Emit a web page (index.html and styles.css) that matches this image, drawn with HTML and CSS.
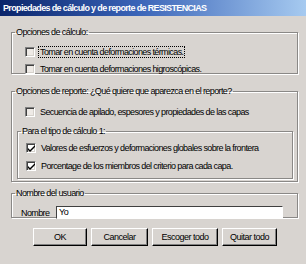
FILE: index.html
```html
<!DOCTYPE html>
<html>
<head>
<meta charset="utf-8">
<link rel="stylesheet" href="styles.css">
</head>
<body>
<div class="window">
  <div class="titlebar">Propiedades de cálculo y de reporte de RESISTENCIAS</div>
  <div class="content">
    <fieldset class="group g1">
      <legend>Opciones de cálculo:</legend>
      <div class="row"><span class="cb"></span><span class="lbl focus">Tomar en cuenta deformaciones térmicas.</span></div>
      <div class="row"><span class="cb"></span><span class="lbl">Tomar en cuenta deformaciones higroscópicas.</span></div>
    </fieldset>
    <fieldset class="group g2">
      <legend>Opciones de reporte: ¿Qué quiere que aparezca en el reporte?</legend>
      <div class="row"><span class="cb"></span><span class="lbl">Secuencia de apilado, espesores y propiedades de las capas</span></div>
      <fieldset class="group g2b">
        <legend>Para el tipo de cálculo 1:</legend>
        <div class="row"><span class="cb on"><svg viewBox="0 0 7 7" width="7" height="7"><path d="M0 3 L2 5 L7 0 L7 2 L2 7 L0 5 Z" fill="#000"/></svg></span><span class="lbl">Valores de esfuerzos y deformaciones globales sobre la frontera</span></div>
        <div class="row"><span class="cb on"><svg viewBox="0 0 7 7" width="7" height="7"><path d="M0 3 L2 5 L7 0 L7 2 L2 7 L0 5 Z" fill="#000"/></svg></span><span class="lbl">Porcentage de los miembros del criterio para cada capa.</span></div>
      </fieldset>
    </fieldset>
    <fieldset class="group g3">
      <legend>Nombre del usuario</legend>
      <div class="namerow"><span class="nlbl">Nombre</span><span class="input">Yo</span></div>
    </fieldset>
    <div class="buttons">
      <span class="btn b1">OK</span>
      <span class="btn b2">Cancelar</span>
      <span class="btn b3">Escoger todo</span>
      <span class="btn b4">Quitar todo</span>
    </div>
  </div>
</div>
</body>
</html>
```
FILE: styles.css
```css
html, body { margin: 0; padding: 0; }
body {
  width: 306px; height: 264px; overflow: hidden;
  background: #d8d4d0;
  font-family: "Liberation Sans", Arial, sans-serif;
  font-size: 9px;
  color: #000;
}
.window { width: 306px; height: 264px; }
.titlebar {
  height: 16px;
  line-height: 16px;
  padding-left: 3px;
  background: linear-gradient(to right, #0a246a 0%, #3a64b8 45%, #a6caf0 100%);
  color: #fff;
  font-weight: bold;
  font-size: 9px;
  letter-spacing: -0.65px;
  white-space: nowrap;
}
.content { padding: 0 8px 0 11px; }
.group {
  margin: 0;
  padding: 0;
  border: 1px solid #8a8886;
  box-shadow: 1px 1px 0 #fff, inset 1px 1px 0 #fff;
}
.group legend {
  padding: 0 1px;
  margin-left: 3px;
  line-height: 10px;
  letter-spacing: -0.6px;
}
.g1 { margin-top: 11px; height: 45px; width: 285px; }
.g2 { margin-top: 12px; height: 94px; width: 285px; }
.g2b { margin: 6px 4px 0 5px; height: 51px; }
.g3 { margin-top: 6px; height: 28px; width: 285px; }
.row {
  display: flex; align-items: center;
  height: 17px;
  padding-left: 13px;
  white-space: nowrap;
}
.g1 .row:first-of-type { margin-top: 6px; }
.g2 > .row { margin-top: 7px; }
.g2b .row { padding-left: 8px; height: 18px; }
.g2b .row:first-of-type { margin-top: 3px; }
.cb {
  width: 8px; height: 8px;
  border-top: 1px solid #808080; border-left: 1px solid #808080;
  border-right: 1px solid #fff; border-bottom: 1px solid #fff;
  box-shadow: inset 1px 1px 0 #404040, inset -1px -1px 0 #d6d2cc;
  background: #eeeae6;
  margin-right: 3px;
  display: flex; align-items: center; justify-content: center;
}
.cb.on { background: #fff; }
.lbl { letter-spacing: -0.62px; padding: 0 1px; border: 1px solid transparent; }
.focus { border: 1px dotted #000; }
.namerow { display: flex; align-items: center; padding: 8px 0 0 9px; }
.nlbl { width: 35px; letter-spacing: -0.6px; }
.input {
  width: 223px; height: 11px; line-height: 11px;
  background: #fff;
  border-top: 1px solid #404040; border-left: 1px solid #404040;
  border-right: 1px solid #fff; border-bottom: 1px solid #fff;
  padding-left: 2px;
  letter-spacing: -0.4px;
}
.buttons { display: flex; gap: 4px; margin-top: 10px; padding-left: 22px; }
.btn {
  height: 16px; line-height: 16px; text-align: center;
  border-top: 1px solid #fff; border-left: 1px solid #fff;
  border-right: 1px solid #000; border-bottom: 1px solid #000;
  box-shadow: inset -1px -1px 0 #808080;
  letter-spacing: -0.5px;
}
.b1 { width: 52px; }
.b2 { width: 55px; }
.b3 { width: 64px; }
.b4 { width: 53px; }
```
